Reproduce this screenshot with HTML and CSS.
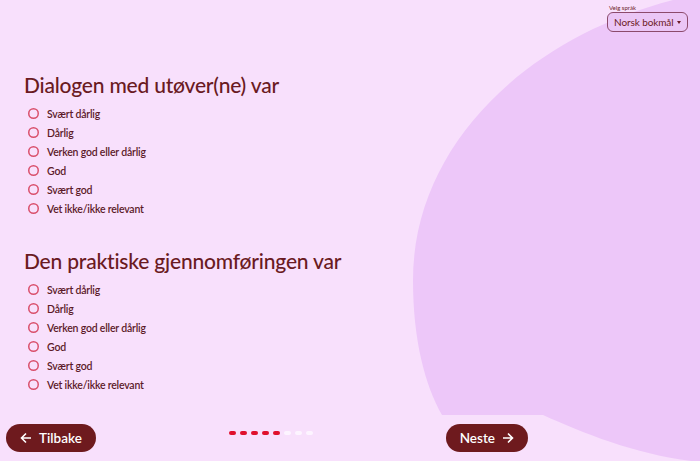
FILE: index.html
```html
<!DOCTYPE html>
<html lang="nb">

<head>
  <meta charset="UTF-8">
  <meta name="viewport" content="width=device-width, initial-scale=1.0">
  <title>Evaluering</title>
  <link rel="stylesheet" href="styles.css">
</head>

<body>
  <!-- decorative blob behind the page -->
  <svg class="backdrop" width="700" height="461" viewBox="0 0 700 461" aria-hidden="true">
    <path d="M673 0 C520 40 413 150 413 280 C413 340 425 385 442 415 L543 415 C585 434 640 456 700 462 L700 0 Z" fill="#edc7f9" />
  </svg>

  <header class="topbar">
    <div class="lang">
      <label for="lang">Velg språk</label>
      <button type="button" id="lang" class="lang-select">Norsk bokmål <span class="caret"></span></button>
    </div>
  </header>

  <main class="survey">
    <section class="question">
      <h2>Dialogen med utøver(ne) var</h2>
      <ul class="options">
        <li><label><input type="radio" name="q1" value="1"> Svært dårlig</label></li>
        <li><label><input type="radio" name="q1" value="2"> Dårlig</label></li>
        <li><label><input type="radio" name="q1" value="3"> Verken god eller dårlig</label></li>
        <li><label><input type="radio" name="q1" value="4"> God</label></li>
        <li><label><input type="radio" name="q1" value="5"> Svært god</label></li>
        <li><label><input type="radio" name="q1" value="0"> Vet ikke/ikke relevant</label></li>
      </ul>
    </section>

    <section class="question">
      <h2>Den praktiske gjennomføringen var</h2>
      <ul class="options">
        <li><label><input type="radio" name="q2" value="1"> Svært dårlig</label></li>
        <li><label><input type="radio" name="q2" value="2"> Dårlig</label></li>
        <li><label><input type="radio" name="q2" value="3"> Verken god eller dårlig</label></li>
        <li><label><input type="radio" name="q2" value="4"> God</label></li>
        <li><label><input type="radio" name="q2" value="5"> Svært god</label></li>
        <li><label><input type="radio" name="q2" value="0"> Vet ikke/ikke relevant</label></li>
      </ul>
    </section>
  </main>

  <footer class="nav">
    <button type="button" class="btn">
      <svg width="12" height="12" viewBox="0 0 12 12"><path d="M11 6H1.5M6 1.5L1.5 6L6 10.5" fill="none" stroke="currentColor" stroke-width="1.6" /></svg>
      Tilbake
    </button>
    <div class="steps">
      <span class="done"></span><span class="done"></span><span class="done"></span><span class="done"></span><span class="done"></span>
      <span></span><span></span><span></span>
    </div>
    <button type="button" class="btn">
      Neste
      <svg width="12" height="12" viewBox="0 0 12 12"><path d="M1 6h9.5M6 1.5L10.5 6L6 10.5" fill="none" stroke="currentColor" stroke-width="1.6" /></svg>
    </button>
  </footer>
</body>

</html>
```

FILE: styles.css
```css
body {
  margin: 0;
  padding: 0;
  height: 461px;
  overflow: hidden;
  position: relative;
  display: flex;
  flex-direction: column;
  font-family: Lato, "Noto Sans", sans-serif;
  background: #f8e0fc;
  color: #6b1a24;
}

.backdrop {
  position: absolute;
  top: 0;
  left: 0;
  z-index: -1;
}

.topbar {
  height: 40px;
  display: flex;
  justify-content: flex-end;
  padding-right: 12px;
}

.lang {
  display: flex;
  flex-direction: column;
  align-items: flex-start;
  padding-top: 4px;
}

.lang label {
  font-size: 6px;
  line-height: 8px;
  margin-left: 2px;
  color: #6b1a24;
}

.lang-select {
  font-family: inherit;
  font-size: 10px;
  letter-spacing: -0.1px;
  color: #6b1a24;
  background: #ebc6f6;
  border: 1px solid #8c4a6c;
  border-radius: 6px;
  width: 81px;
  height: 20px;
  padding: 0 6px 0 6px;
  display: flex;
  align-items: center;
  justify-content: space-between;
}

.caret {
  width: 0;
  height: 0;
  border-left: 2.5px solid transparent;
  border-right: 2.5px solid transparent;
  border-top: 3px solid #6b1a24;
}

.survey {
  padding-left: 24px;
}

.question {
  margin-top: 31px;
}

.question + .question {
  margin-top: 29px;
}

.question h2 {
  margin: 0;
  font-size: 21px;
  line-height: 28px;
  font-weight: 500;
  letter-spacing: -0.2px;
  color: #6a1a22;
}

.options {
  list-style: none;
  margin: 5px 0 0 0;
  padding: 0 0 0 4px;
}

.options li {
  height: 19px;
  display: flex;
  align-items: center;
}

.options label {
  display: flex;
  align-items: center;
  gap: 8px;
  font-size: 10.5px;
  font-weight: 600;
  letter-spacing: -0.2px;
  color: #5c1a28;
}

/* ring drawn with a shadow so the stroke can sit between whole pixels */
.options input {
  appearance: none;
  margin: 0;
  width: 11px;
  height: 11px;
  border: none;
  border-radius: 50%;
  box-shadow: inset 0 0 0 1.5px #d9506c;
}

.nav {
  margin-top: auto;
  width: 522px;
  padding: 0 0 9px 6px;
  display: flex;
  align-items: center;
  justify-content: space-between;
}

.btn {
  font-family: inherit;
  background-color: #6e1a1e;
  color: white;
  border: none;
  height: 28px;
  padding: 0 14px;
  font-size: 13.5px;
  font-weight: 600;
  border-radius: 14px;
  display: inline-flex;
  align-items: center;
  gap: 7px;
  cursor: pointer;
}

.steps {
  display: flex;
  gap: 4px;
  margin-bottom: 10px;
}

.steps span {
  width: 7px;
  height: 4px;
  border-radius: 2px;
  background: #fdf4ff;
}

.steps span.done {
  background: #e0102c;
}
```
